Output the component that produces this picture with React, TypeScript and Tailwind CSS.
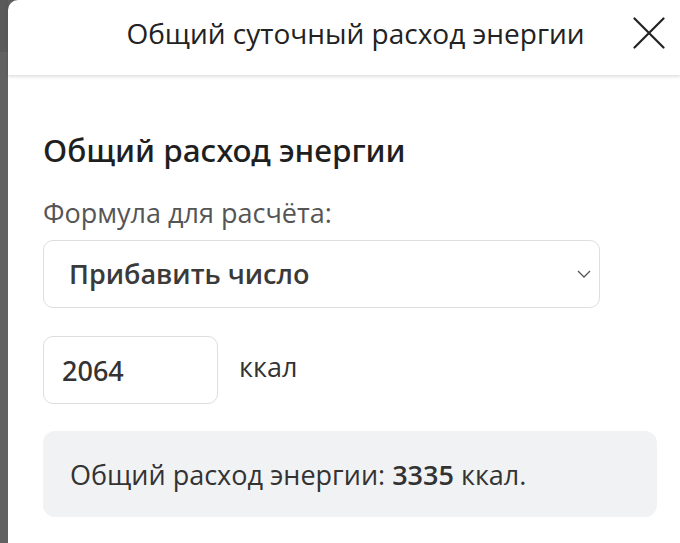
import React from "react";

const med = { fontFamily: '"Noto Sans", "Open Sans", sans-serif' };

export default function App() {
  return (
    <div
      className="w-[680px] h-[543px] overflow-hidden bg-[#5e5e5e] flex"
      style={{ fontFamily: '"Open Sans", "Noto Sans", sans-serif' }}
    >
      <div className="w-[8px] shrink-0 flex flex-col">
        <div className="h-[52px] bg-[#5a5a5a]" />
        <div className="flex-1 bg-[#616161]" />
      </div>
      <div className="flex-1 bg-white rounded-tl-[10px] flex flex-col">
        <div className="h-[75px] shrink-0 flex items-center relative shadow-[0_2px_3px_rgba(0,0,0,0.12)] z-10">
          <div className="flex-1 text-center text-[28px] text-[#222] pl-[85px] leading-none pb-[9px] whitespace-nowrap">
            Общий суточный расход энергии
          </div>
          <div className="w-[62px] flex items-center justify-center pb-[9px]">
            <svg width="32" height="32" viewBox="0 0 32 32" fill="none" stroke="#222" strokeWidth="2.2" strokeLinecap="round">
              <path d="M1.5 1.5L30.5 30.5M30.5 1.5L1.5 30.5" />
            </svg>
          </div>
        </div>
        <div className="pl-[35px] pr-[15px] pt-[55px] flex flex-col">
          <div className="text-[31.5px] font-medium text-[#1f1f1f] leading-[40px] whitespace-nowrap" style={med}>Общий расход энергии</div>
          <div className="mt-[27px] text-[27px] text-[#555] leading-[32px] whitespace-nowrap">Формула для расчёта:</div>
          <div className="mt-[11px] w-[557px] h-[68px] border border-[#dedede] rounded-[10px] flex items-center pl-[25px] pr-[8px]">
            <span className="flex-1 text-[27px] font-semibold text-[#3a3a3a] leading-none pb-[2px]">Прибавить число</span>
            <svg width="14" height="8" viewBox="0 0 14 8" fill="none" stroke="#555" strokeWidth="1.3">
              <path d="M1 1L7 7L13 1" />
            </svg>
          </div>
          <div className="mt-[28px] flex items-center">
            <div className="w-[175px] h-[68px] border border-[#dedede] rounded-[10px] flex items-center pl-[18px] text-[27px] font-medium text-[#333] leading-none" style={med}>
              2064
            </div>
            <span className="ml-[21px] text-[27px] text-[#333] leading-none -mt-[7px]">ккал</span>
          </div>
          <div className="mt-[27px] w-[614px] h-[86px] bg-[#f1f2f4] rounded-[12px] flex items-center pl-[27px] text-[27px] text-[#333] leading-none">
            <span className="whitespace-nowrap">
              Общий расход энергии: <b className="font-semibold">3335</b> ккал.
            </span>
          </div>
        </div>
      </div>
    </div>
  );
}
